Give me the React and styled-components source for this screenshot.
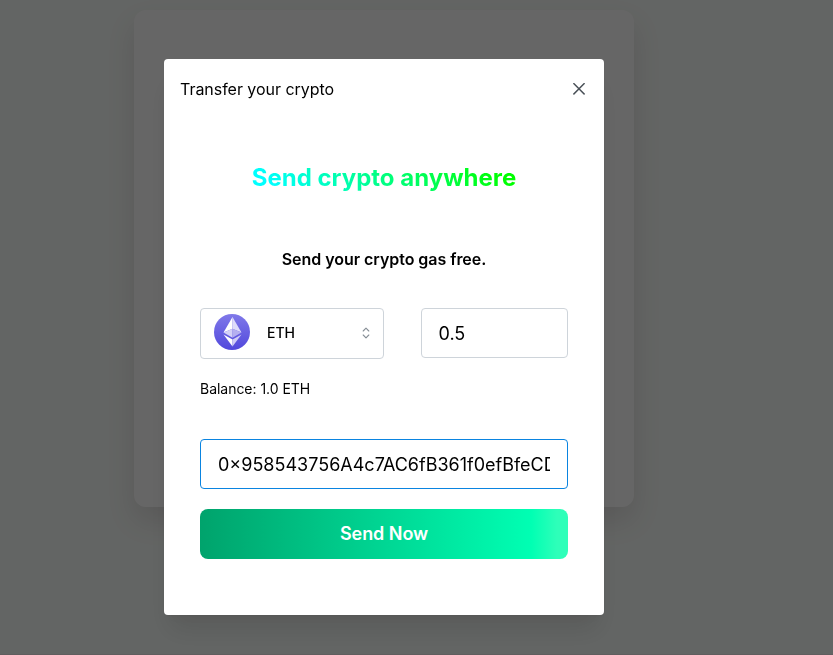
import React from "react";
import styled, { createGlobalStyle } from "styled-components";

const Global = createGlobalStyle`
  * { box-sizing: border-box; }
  body { margin: 0; overflow: hidden; background: #f8fcf9; font-family: Inter, sans-serif; color: #000; }
  button, input { font-family: inherit; }
`;

const Page = styled.main`
  height: 655px;
  padding-left: 134px;
  padding-top: 10px;
  border-bottom: 1px solid #f0e8ea;
`;

const Card = styled.section`
  width: 500px;
  height: 497px;
  border-radius: 12px;
  background: #fff;
  box-shadow: 0 14px 28px rgba(60, 20, 35, 0.12);
`;

const Overlay = styled.div`
  position: fixed;
  inset: 0;
  padding: 59px 0 0 164px;
  background: rgba(0, 0, 0, 0.6);
`;

const Modal = styled.div`
  width: 440px;
  height: 556px;
  border-radius: 4px;
  background: #fff;
  box-shadow: 0 1px 3px rgba(0, 0, 0, 0.05), 0 20px 25px -5px rgba(0, 0, 0, 0.1), 0 10px 10px -5px rgba(0, 0, 0, 0.04);
`;

const Header = styled.header`
  display: flex;
  align-items: center;
  justify-content: space-between;
  height: 60px;
  padding: 0 11px 0 16px;
  font-size: 16px;
  letter-spacing: -0.03px;
`;

const CloseButton = styled.button`
  display: flex;
  align-items: center;
  justify-content: center;
  width: 28px;
  height: 28px;
  padding: 0;
  border: 0;
  background: transparent;
  color: #495057;
`;

const Body = styled.form`
  display: flex;
  flex-direction: column;
  padding: 0 36px;
`;

const Heading = styled.h2`
  align-self: center;
  margin: 40px 0 0;
  font-size: 24px;
  line-height: 37px;
  font-weight: 700;
  background: linear-gradient(45deg, #00ffff 10%, #00ff00 90%);
  background-clip: text;
  -webkit-background-clip: text;
  color: transparent;
`;

const Tagline = styled.p`
  margin: 51px 0 0;
  text-align: center;
  font-size: 16px;
  line-height: 24px;
  font-weight: 600;
  letter-spacing: -0.04px;
`;

const Row = styled.div`
  display: grid;
  grid-template-columns: 184px 147px;
  justify-content: space-between;
  align-items: start;
  margin-top: 37px;
`;

const TokenSelect = styled.button`
  display: flex;
  align-items: center;
  height: 51px;
  padding: 0 11px 3px 13px;
  border: 1px solid #ced4da;
  border-radius: 4px;
  background: #fff;
  color: #000;
`;

const TokenName = styled.span`
  flex: 1;
  margin: 0 0 0 17px;
  text-align: left;
  font-size: 14px;
  font-weight: 500;
`;

const Field = styled.input`
  width: 100%;
  height: 50px;
  padding: 0 17px 0 ${(p) => (p.$active ? "17px" : "16.5px")};
  border: 1px solid ${(p) => (p.$active ? "#0a84e0" : "#ced4da")};
  border-radius: 4px;
  outline: 0;
  background: #fff;
  color: #000;
  font-size: 18px;
`;

const Balance = styled.p`
  margin: 19px 0 40px;
  font-size: 14px;
  line-height: 21px;
  letter-spacing: -0.03px;
`;

const SendButton = styled.button`
  height: 50px;
  margin-top: 20px;
  padding: 0 0 2px;
  border: 0;
  border-radius: 8px;
  background: linear-gradient(90deg, #00a36c 0%, #00ffb3 90%, #2effb9 97%);
  color: #fff;
  font-size: 18px;
  font-weight: 600;
  letter-spacing: -0.05px;
`;

const CloseIcon = () => (
  <svg width="12" height="12" viewBox="0 0 12 12" fill="none" stroke="currentColor" strokeWidth="1.5">
    <path d="M.4.2l11.2 11.2M11.6.2L.4 11.4" />
  </svg>
);

const EthereumIcon = () => (
  <svg width="36" height="36" viewBox="0 0 36 36">
    <defs>
      <linearGradient id="coin" x1="0" y1="0" x2="0" y2="1">
        <stop stopColor="#8079e9" />
        <stop offset="1" stopColor="#5148dc" />
      </linearGradient>
    </defs>
    <circle cx="18" cy="18" r="18" fill="url(#coin)" />
    <path d="M18.5 3L9.5 18.5l9-3.8z" fill="#fff" />
    <path d="M18.5 3l9 15.5-9-3.8z" fill="#dedcfa" />
    <path d="M9.5 18.5l9-3.8v9z" fill="#d4d1f7" />
    <path d="M27.5 18.5l-9-3.8v9z" fill="#b5b0f0" />
    <path d="M9.5 20.5l9 5V32.5z" fill="#fff" />
    <path d="M27.5 20.5l-9 5V32.5z" fill="#d0ccf6" />
  </svg>
);

const SelectorSvg = styled.svg`
  margin-top: 2px;
`;

const SelectorIcon = () => (
  <SelectorSvg width="12" height="14" viewBox="0 0 12 14" fill="none" stroke="#868e96" strokeWidth="1.1" strokeLinecap="round" strokeLinejoin="round">
    <path d="M3.2 5L6 2.2 8.8 5M3.2 9L6 11.8 8.8 9" />
  </SelectorSvg>
);

export default function App() {
  return (
    <>
      <Global />
      <Page><Card /></Page>
      <Overlay>
        <Modal role="dialog" aria-label="Transfer your crypto">
          <Header>
            <span>Transfer your crypto</span>
            <CloseButton aria-label="Close"><CloseIcon /></CloseButton>
          </Header>
          <Body onSubmit={(e) => e.preventDefault()}>
            <Heading>Send crypto anywhere</Heading>
            <Tagline>Send your crypto gas free.</Tagline>
            <Row>
              <TokenSelect type="button">
                <EthereumIcon />
                <TokenName>ETH</TokenName>
                <SelectorIcon />
              </TokenSelect>
              <Field defaultValue="0.5" aria-label="Amount" />
            </Row>
            <Balance>Balance: 1.0 ETH</Balance>
            <Field $active defaultValue="0×958543756A4c7AC6fB361f0efBfeCD9" aria-label="Recipient" />
            <SendButton>Send Now</SendButton>
          </Body>
        </Modal>
      </Overlay>
    </>
  );
}
